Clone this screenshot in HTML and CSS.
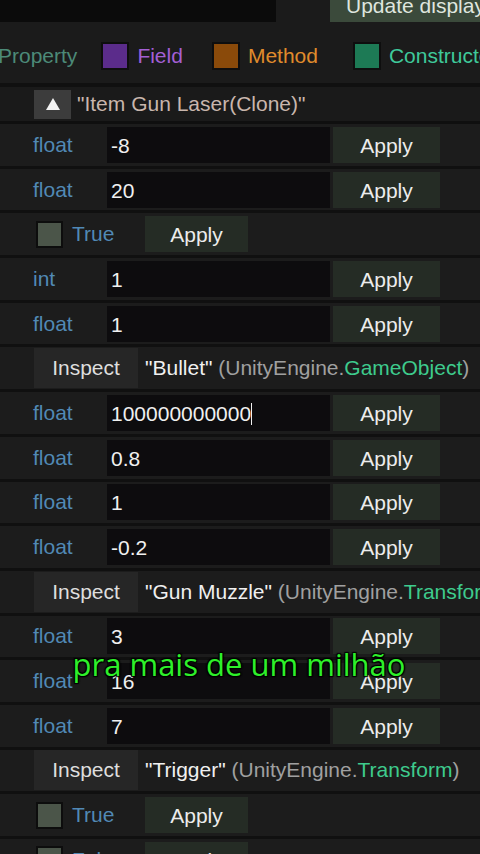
FILE: index.html
```html
<!DOCTYPE html>
<html>
    <head>
	<meta charset="UTF-8">
	<meta name="viewport" content="width=device-width, initial-scale=1.0">
	<title>Inspector</title>
	<link rel="stylesheet" href="styles.css">
    </head>
    <body>
	<div class="topbar">
		<div class="search"></div>
		<div class="update">Update display</div>
	</div>

	<div class="legend">
		<span class="leg_text prop">Property</span>
		<span class="swatch sw_field"></span><span class="leg_text field">Field</span>
		<span class="swatch sw_method"></span><span class="leg_text method">Method</span>
		<span class="swatch sw_ctor"></span><span class="leg_text ctor">Constructor</span>
	</div>

	<div class="head_row">
		<div class="collapse"><svg width="14" height="12" viewBox="0 0 14 12"><polygon points="7,0 14,12 0,12" fill="#f4f4f4"/></svg></div>
		<span class="obj_name">"Item Gun Laser(Clone)"</span>
	</div>

	<div class="list">
		<div class="row"><span class="type">float</span><div class="value">-8</div><div class="apply">Apply</div></div>
		<div class="row"><span class="type">float</span><div class="value">20</div><div class="apply">Apply</div></div>
		<div class="row"><span class="check"></span><span class="bool">True</span><div class="apply small">Apply</div></div>
		<div class="row"><span class="type">int</span><div class="value">1</div><div class="apply">Apply</div></div>
		<div class="row"><span class="type">float</span><div class="value">1</div><div class="apply">Apply</div></div>
		<div class="row"><div class="inspect">Inspect</div><span class="ref">"Bullet" <span class="ns">(UnityEngine.</span><span class="cls">GameObject</span><span class="ns">)</span></span></div>
		<div class="row"><span class="type">float</span><div class="value">100000000000<span class="caret"></span></div><div class="apply">Apply</div></div>
		<div class="row"><span class="type">float</span><div class="value">0.8</div><div class="apply">Apply</div></div>
		<div class="row"><span class="type">float</span><div class="value">1</div><div class="apply">Apply</div></div>
		<div class="row"><span class="type">float</span><div class="value">-0.2</div><div class="apply">Apply</div></div>
		<div class="row"><div class="inspect">Inspect</div><span class="ref">"Gun Muzzle" <span class="ns">(UnityEngine.</span><span class="cls">Transform</span><span class="ns">)</span></span></div>
		<div class="row"><span class="type">float</span><div class="value">3</div><div class="apply">Apply</div></div>
		<div class="row"><span class="type">float</span><div class="value">16</div><div class="apply">Apply</div></div>
		<div class="row"><span class="type">float</span><div class="value">7</div><div class="apply">Apply</div></div>
		<div class="row"><div class="inspect">Inspect</div><span class="ref">"Trigger" <span class="ns">(UnityEngine.</span><span class="cls">Transform</span><span class="ns">)</span></span></div>
		<div class="row"><span class="check"></span><span class="bool">True</span><div class="apply small">Apply</div></div>
		<div class="row"><span class="check"></span><span class="bool">False</span><div class="apply small">Apply</div></div>
	</div>

	<div class="subtitle">pra mais de um milhão</div>
    </body>
</html>
```

FILE: styles.css
```css
body {
	background-color: #1b1b1b;
	margin: 0px;
	padding: 0px;
	height: 854px;
	overflow: hidden;
	position: relative;
	font-family: "Liberation Sans", Arial, sans-serif;
	font-size: 21px;
	color: #e6e6e6;
}

.topbar {
	display: flex;
	height: 22px;
}
.search {
	width: 276px;
	background-color: #0b0b0b;
}
.update {
	margin-left: auto;
	width: 134px;
	padding-left: 16px;
	background-color: #3b4a3b;
	color: #dfe6df;
	line-height: 12px;
	white-space: nowrap;
	overflow: hidden;
}

.legend {
	box-sizing: border-box;
	height: 65px;
	padding-top: 7px;
	display: flex;
	align-items: center;
	white-space: nowrap;
	border-bottom: 4px solid #101010;
}
.leg_text {
	margin-right: 21px;
}
.prop {
	color: #4c8a78;
	margin-right: 24px;
	margin-left: -2px;
}
.swatch {
	width: 24px;
	height: 24px;
	border: 2px solid #0e0e0e;
	margin-right: 8px;
	flex: none;
}
.sw_field { background-color: #5b2c8b; }
.sw_method { background-color: #8a4a0a; }
.sw_ctor { background-color: #1d7a55; }
.field { color: #a35fd4; margin-right: 29px; }
.method { color: #e08b2c; margin-right: 35px; }
.ctor { color: #3fc99a; }

.head_row {
	height: 34px;
	display: flex;
	align-items: center;
	border-bottom: 3px solid #0f0f0f;
	background-color: #1a1a1a;
}
.collapse {
	width: 37px;
	height: 29px;
	margin-left: 34px;
	margin-right: 6px;
	background-color: #3c3c3c;
	display: flex;
	align-items: center;
	justify-content: center;
}
.obj_name {
	color: #c9b6ad;
}

.row {
	height: 41.7px;
	border-bottom: 3px solid #101010;
	display: flex;
	align-items: center;
	background-color: #1c1c1c;
	white-space: nowrap;
}
.type {
	width: 74px;
	padding-left: 33px;
	color: #5189b5;
	flex: none;
}
.value {
	width: 219px;
	height: 36px;
	line-height: 38px;
	padding-left: 4px;
	background-color: #0d0c0e;
	color: #f0f0f0;
	flex: none;
}
.caret {
	display: inline-block;
	width: 1px;
	height: 22px;
	background-color: #f0f0f0;
	vertical-align: -4px;
}
.apply {
	width: 107px;
	height: 36px;
	line-height: 38px;
	margin-left: 3px;
	background-color: #252c25;
	color: #ececec;
	text-align: center;
	flex: none;
}
.apply.small {
	width: 103px;
	margin-left: 0px;
}
.check {
	width: 23px;
	height: 23px;
	margin-left: 36px;
	border: 2px solid #0d0d0d;
	background-color: #4b5549;
	flex: none;
}
.bool {
	width: 73px;
	padding-left: 9px;
	color: #5189b5;
	flex: none;
}
.inspect {
	width: 104px;
	height: 40px;
	line-height: 40px;
	margin-left: 34px;
	margin-right: 7px;
	background-color: #262626;
	color: #dedede;
	text-align: center;
	flex: none;
}
.ref {
	color: #f0f0f0;
}
.ns {
	color: #a0a0a0;
}
.cls {
	color: #3ecb8d;
}

.subtitle {
	position: absolute;
	left: 0px;
	right: 0px;
	top: 643px;
	text-align: center;
	font-family: "Open Sans", sans-serif;
	font-weight: 500;
	font-size: 31px;
	color: #2ef02a;
	padding-right: 2px;
	text-shadow: 0 0 2px #000, 1px 1px 1px #000, -1px -1px 1px #000, 1px -1px 1px #000, -1px 1px 1px #000;
}
```
